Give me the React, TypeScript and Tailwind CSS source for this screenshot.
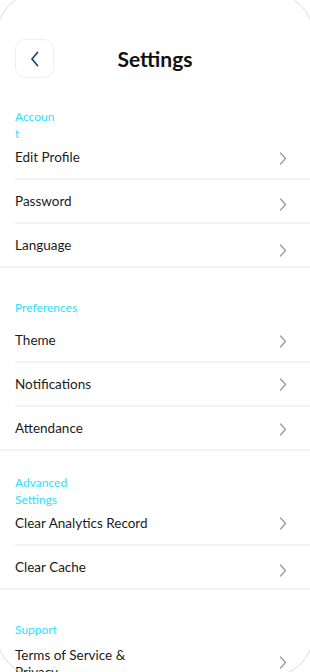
import React from "react";

type Row = { label: React.ReactNode; chev: string; two?: boolean };
type Section = { title: React.ReactNode; pt: string; rows: Row[] };

const sections: Section[] = [
  {
    title: (
      <>
        Accoun
        <br />t
      </>
    ),
    pt: "pt-[35px]",
    rows: [
      { label: "Edit Profile", chev: "top-[1px]" },
      { label: "Password", chev: "top-[3px]" },
      { label: "Language", chev: "top-[5px]" },
    ],
  },
  {
    title: "Preferences",
    pt: "pt-[28px]",
    rows: [
      { label: "Theme", chev: "top-[1px]" },
      { label: "Notifications", chev: "top-0" },
      { label: "Attendance", chev: "top-[1px]" },
    ],
  },
  {
    title: (
      <>
        Advanced
        <br />
        Settings
      </>
    ),
    pt: "pt-[28px]",
    rows: [
      { label: "Clear Analytics Record", chev: "top-0" },
      { label: "Clear Cache", chev: "top-[3px]" },
    ],
  },
  {
    title: "Support",
    pt: "pt-[28px]",
    rows: [
      {
        label: (
          <>
            Terms of Service &amp;
            <br />
            Privacy
          </>
        ),
        chev: "top-0",
        two: true,
      },
    ],
  },
];

function Chevron({ className }: { className: string }) {
  return (
    <svg
      width="8"
      height="13"
      viewBox="0 0 8 13"
      fill="none"
      className={"relative shrink-0 " + className}
    >
      <path
        d="M1.5 1 L6.5 6.5 L1.5 12"
        stroke="#9b9b9b"
        strokeWidth="1.3"
        strokeLinecap="round"
        strokeLinejoin="round"
      />
    </svg>
  );
}

export default function App() {
  return (
    <div
      className="relative w-[310px] h-[672px] overflow-hidden bg-white text-[#1c1c1c]"
      style={{ fontFamily: "Lato, 'Noto Sans', sans-serif" }}
    >
      <div className="pointer-events-none absolute left-[-4px] right-[-4px] top-[-8px] bottom-[-5px] rounded-[44px] border border-[#dcdcdc]" />

      <div className="grid grid-cols-[39px_1fr_39px] items-center px-[15px] pt-[39px]">
        <div className="flex h-[39px] w-[39px] items-center justify-center rounded-[10px] border border-[#efefef]">
          <svg width="10" height="16" viewBox="0 0 10 16" fill="none">
            <path
              d="M7.5 1.5 L2 8 L7.5 14.5"
              stroke="#1b4b72"
              strokeWidth="1.8"
              strokeLinecap="round"
              strokeLinejoin="round"
            />
          </svg>
        </div>
        <div className="text-center text-[21px] font-bold leading-[24px] text-[#111]">
          Settings
        </div>
        <div />
      </div>

      {sections.map((s, si) => (
        <div key={si} className={s.pt}>
          <div className="flex h-[23px] items-center px-[15px]">
            <div className="text-[12px] leading-[17px] text-[#2fe0fb]">
              {s.title}
            </div>
          </div>
          {s.rows.map((r, ri) => {
            const last = ri === s.rows.length - 1;
            return (
              <div key={ri}>
                <div
                  className={
                    r.two
                      ? "flex items-start justify-between pl-[15px] pr-[23px] pt-[6px]"
                      : "flex h-[42px] items-center justify-between pl-[15px] pr-[23px]"
                  }
                >
                  <div
                    className={
                      r.two
                        ? "text-[13.5px] leading-[17px]"
                        : "text-[13.5px] leading-[20px]"
                    }
                  >
                    {r.label}
                  </div>
                  <Chevron className={r.two ? "top-[9px]" : r.chev} />
                </div>
                <div
                  className={
                    last
                      ? "h-[2px] bg-[#f3f3f3]"
                      : "ml-[15px] h-[2px] bg-[#f3f3f3]"
                  }
                />
              </div>
            );
          })}
        </div>
      ))}
    </div>
  );
}
